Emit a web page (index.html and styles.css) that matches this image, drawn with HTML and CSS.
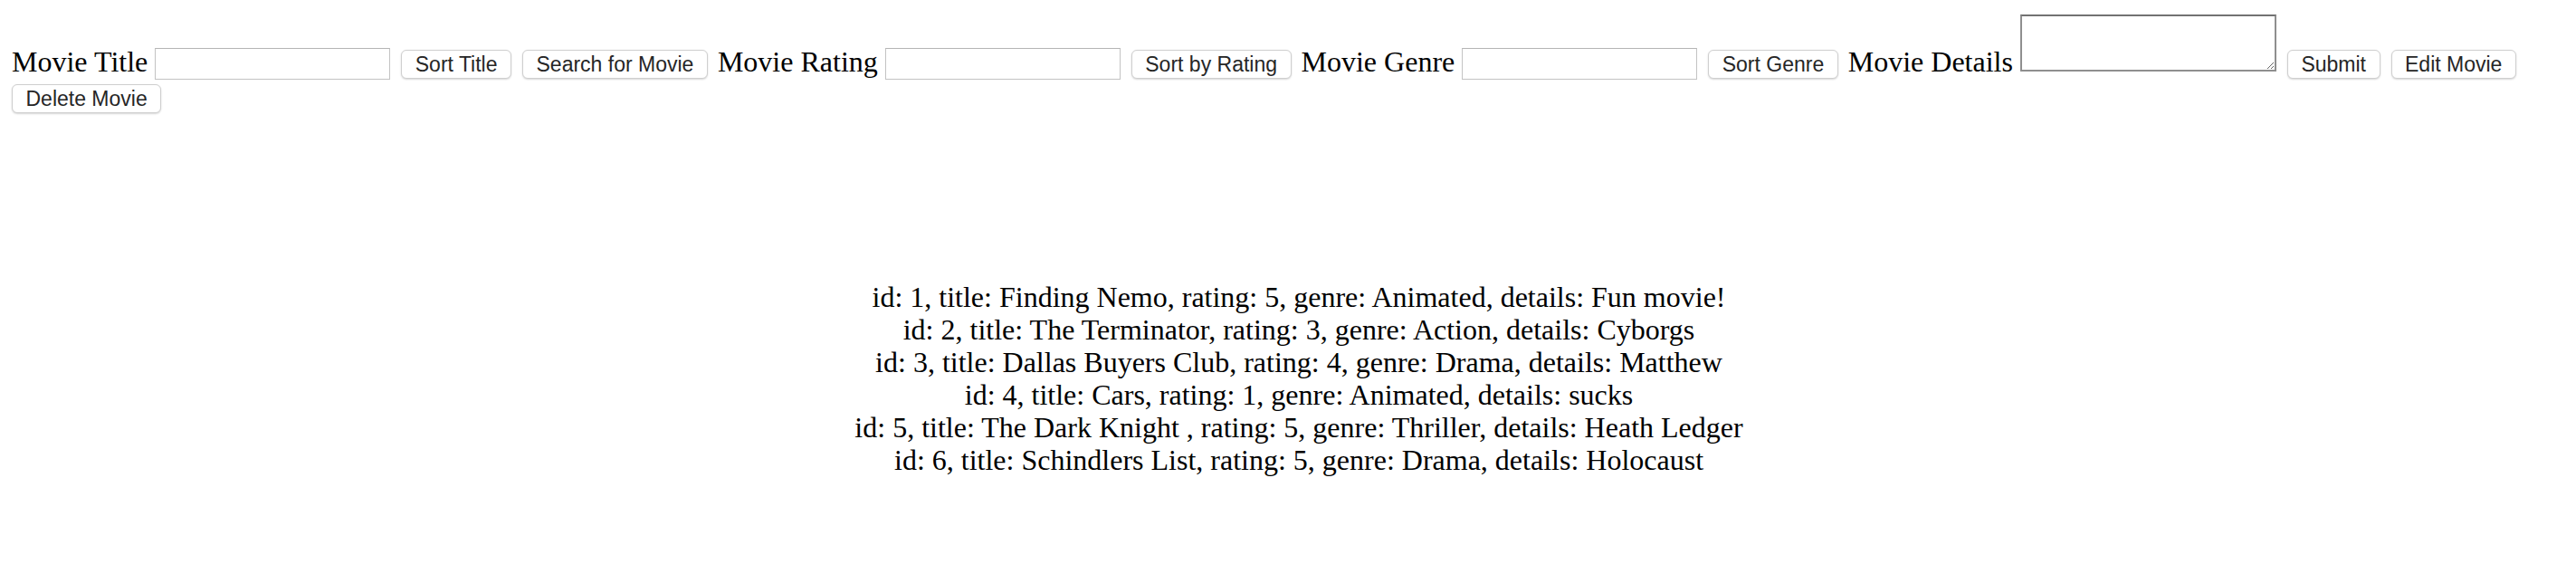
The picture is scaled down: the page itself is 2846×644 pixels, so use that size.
FILE: index.html
```html
<!DOCTYPE html>
<html lang="en">
<head>
<meta charset="utf-8">
<title>Movies</title>
<link rel="stylesheet" href="styles.css">
</head>
<body>
<form class="toolbar">
  <label class="lbl lbl-first" for="title">Movie Title</label>
  <input class="field" id="title" type="text">
  <button class="btn" type="button">Sort Title</button>
  <button class="btn" type="button">Search for Movie</button>
  <label class="lbl" for="rating">Movie Rating</label>
  <input class="field" id="rating" type="text">
  <button class="btn" type="button">Sort by Rating</button>
  <label class="lbl" for="genre">Movie Genre</label>
  <input class="field" id="genre" type="text">
  <button class="btn" type="button">Sort Genre</button>
  <label class="lbl" for="details">Movie Details</label>
  <textarea class="notes" id="details"></textarea>
  <button class="btn" type="button">Submit</button>
  <button class="btn" type="button">Edit Movie</button>
  <button class="btn btn-first" type="button">Delete Movie</button>
</form>
<ul class="movies">
  <li>id: 1, title: Finding Nemo, rating: 5, genre: Animated, details: Fun movie!</li>
  <li>id: 2, title: The Terminator, rating: 3, genre: Action, details: Cyborgs</li>
  <li>id: 3, title: Dallas Buyers Club, rating: 4, genre: Drama, details: Matthew</li>
  <li>id: 4, title: Cars, rating: 1, genre: Animated, details: sucks</li>
  <li>id: 5, title: The Dark Knight , rating: 5, genre: Thriller, details: Heath Ledger</li>
  <li>id: 6, title: Schindlers List, rating: 5, genre: Drama, details: Holocaust</li>
</ul>
</body>
</html>
```
FILE: styles.css
```css
html, body {
  background: #ffffff;
}
body {
  margin: 0;
  padding: 16px 13px 0 13px;
  font-family: "Liberation Serif", "Times New Roman", serif;
  font-size: 32px;
  color: #000000;
}
.toolbar {
  display: flex;
  flex-wrap: wrap;
  align-items: flex-end;
  row-gap: 5px;
  margin: 0;
}
.lbl {
  font-size: 32px;
  line-height: 37px;
  margin: 0 0 1px 11px;
  white-space: nowrap;
}
.lbl-first {
  margin-left: 0;
}
.field {
  box-sizing: border-box;
  width: 260px;
  height: 35px;
  margin: 0 0 0 8px;
  padding: 0 6px;
  border: 1px solid #c3c3c3;
  border-top-color: #b4b4b4;
  border-radius: 0;
  background: #ffffff;
  font-family: "Liberation Sans", Arial, sans-serif;
  font-size: 23px;
  outline: none;
}
.btn {
  box-sizing: border-box;
  height: 32px;
  margin: 0 0 1px 12px;
  padding: 0 14.5px;
  border: 1px solid #cfcfcf;
  border-radius: 6px;
  background: #ffffff;
  box-shadow: 0 1px 2px rgba(0, 0, 0, 0.16);
  font-family: "Liberation Sans", Arial, sans-serif;
  font-size: 23px;
  color: #262626;
  white-space: nowrap;
}
.btn-first {
  margin-left: 0;
}
.notes {
  box-sizing: border-box;
  width: 283px;
  height: 63px;
  margin: 0 0 9px 8px;
  padding: 2px;
  border: 2px solid #8f8f8f;
  border-top-color: #727272;
  border-radius: 0;
  background: #ffffff;
  font-family: "Liberation Mono", monospace;
  font-size: 22px;
  outline: none;
}
.movies {
  list-style: none;
  margin: 184px 0 0 0;
  padding: 0 0 0 24px;
  text-align: center;
  font-size: 32px;
  line-height: 36px;
}
.movies li {
  margin: 0;
}
```
